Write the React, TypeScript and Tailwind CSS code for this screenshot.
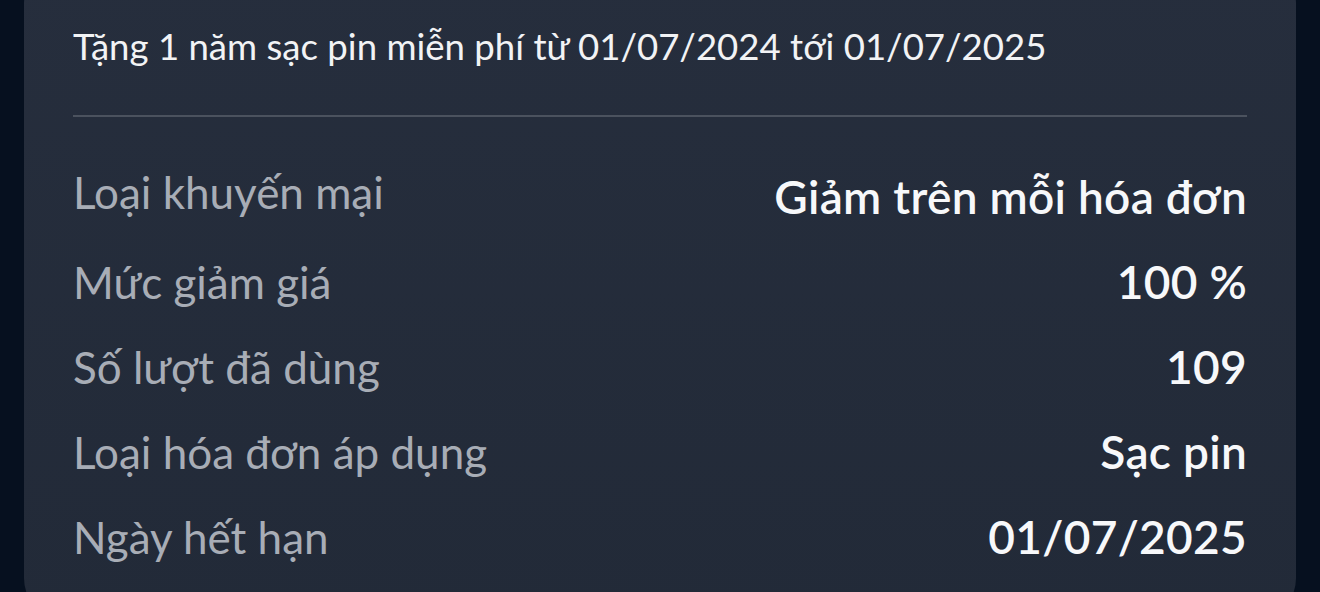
const ROWS = [
  { label: "Loại khuyến mại", value: "Giảm trên mỗi hóa đơn" },
  { label: "Mức giảm giá", value: "100 %" },
  { label: "Số lượt đã dùng", value: "109" },
  { label: "Loại hóa đơn áp dụng", value: "Sạc pin" },
  { label: "Ngày hết hạn", value: "01/07/2025" },
];

export default function App() {
  return (
    <div
      className="h-[592px] w-[1320px] overflow-hidden bg-[#06101f] px-[24px]"
      style={{ fontFamily: 'Lato, "Noto Sans", sans-serif' }}
    >
      <div className="-mt-[40px] rounded-[44px] bg-gradient-to-b from-[#262e3d] to-[#222a38] px-[49px] pb-[60px] pt-[64px]">
        <p className="text-[36.6px] leading-[44px] text-[#f2f3f5]">
          Tặng 1 năm sạc pin miễn phí từ 01/07/2024 tới 01/07/2025
        </p>

        <div className="mt-[47px] h-[2px] bg-[#4b525e]" />

        <div className="mt-[50px] flex flex-col gap-[35px]">
          {ROWS.map((r, i) => (
            <div key={r.label} className="flex items-start justify-between">
              <span className="text-[44px] leading-[50px] text-[#a8adb6]">{r.label}</span>
              <span
                className={`text-[46px] font-semibold leading-[50px] tracking-[0.3px] text-[#f7f8fa] ${i === 0 ? "mt-[5px]" : ""}`}
              >
                {r.value}
              </span>
            </div>
          ))}
        </div>
      </div>
    </div>
  );
}
